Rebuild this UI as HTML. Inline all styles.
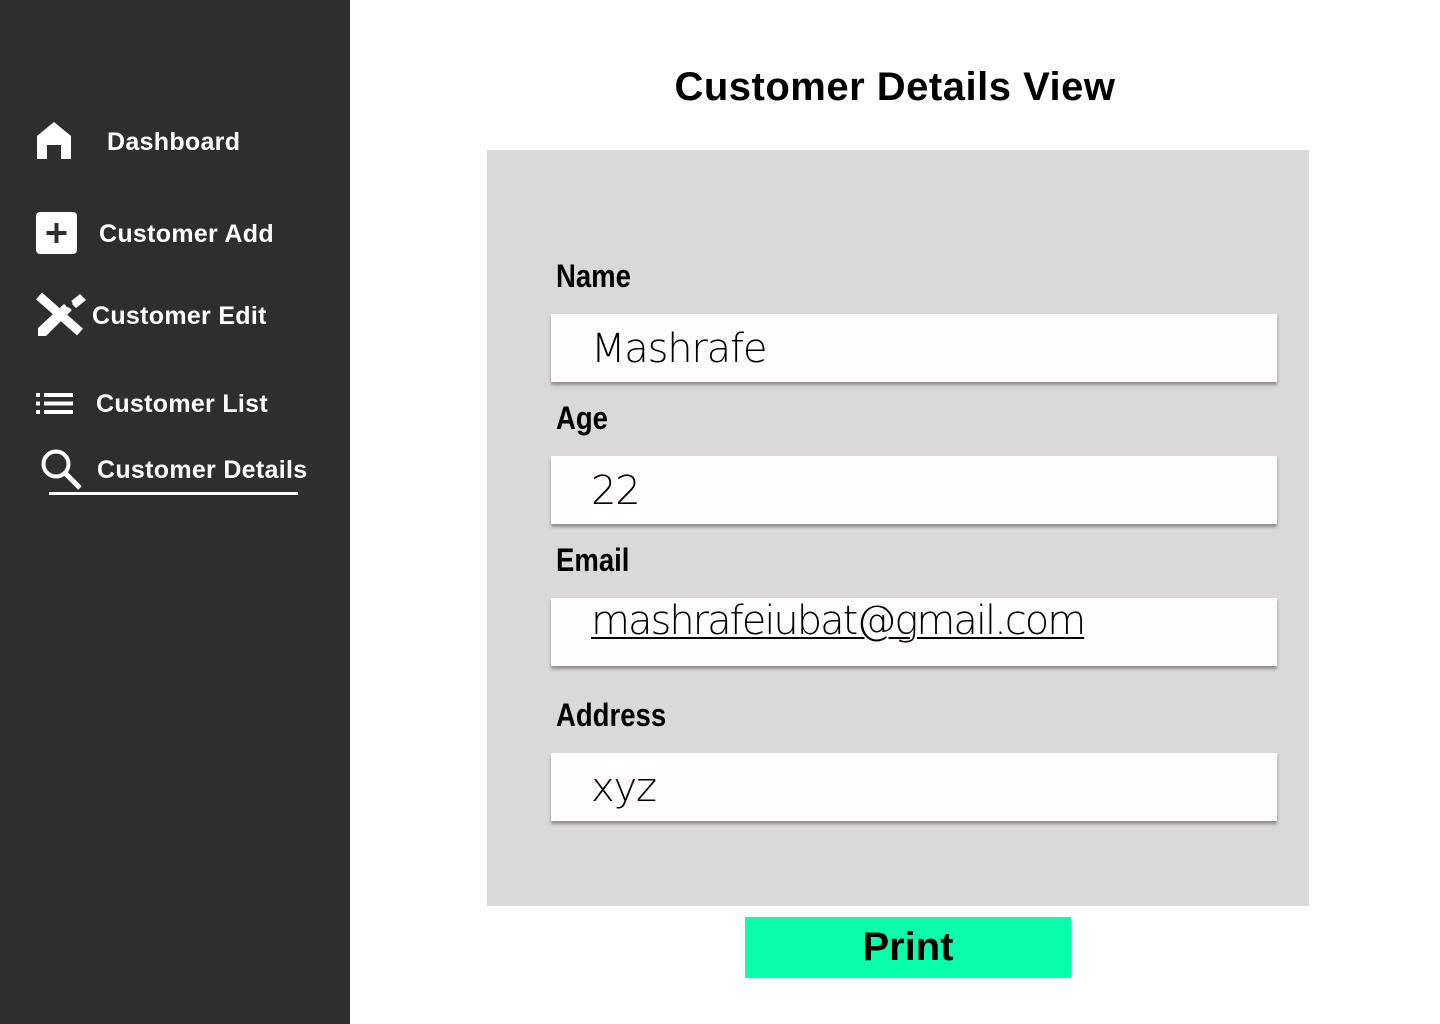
<!DOCTYPE html>
<html><head><meta charset="utf-8"><style>
body{margin:0;width:1440px;height:1024px;position:relative;background:#fff;font-family:"Liberation Sans",sans-serif;overflow:hidden}
.sb{position:absolute;left:0;top:0;width:350px;height:1024px;background:#2e2e2e}
.it{position:absolute;color:#fff;font-weight:bold;font-size:25px;line-height:30px;letter-spacing:0.3px}
.a{position:absolute}
h1{position:absolute;left:0;right:0;margin:0;top:64px;padding-left:350px;text-align:center;font-size:40px;line-height:46px;font-weight:bold;color:#000;letter-spacing:0.5px}
.panel{position:absolute;left:487px;top:150px;width:822px;height:756px;background:#d9d9d9}
.lb{position:absolute;left:556px;font-weight:bold;font-size:32px;line-height:36px;color:#000;transform:scaleX(0.86);transform-origin:0 0}
.bx{position:absolute;left:551px;width:726px;height:68px;background:#fffdfd;box-shadow:0 3px 3px rgba(0,0,0,.35)}
.bx span{position:absolute;left:40px;top:12px;font-size:40px;line-height:46px;color:#000;font-family:"DejaVu Sans","Liberation Sans",sans-serif;font-weight:200;letter-spacing:-1.2px}
.btn{position:absolute;left:745px;top:917px;width:326px;height:61px;background:#0affad;text-align:center;font-size:40px;line-height:61px;font-weight:bold}
</style></head><body>
<div class="sb">
<svg class="a" style="left:37px;top:122px" width="34" height="37" viewBox="0 0 34 37"><path d="M0 14 L17 0 L34 14 V37 H24 V23 H10 V37 H0Z" fill="#fff"/></svg>
<div class="it" style="left:107px;top:127px">Dashboard</div>
<svg class="a" style="left:36px;top:212px" width="41" height="42" viewBox="0 0 41 42"><rect width="41" height="42" rx="4" fill="#fff"/><path d="M20.5 11V31M10.5 21H30.5" stroke="#2e2e2e" stroke-width="4"/></svg>
<div class="it" style="left:99px;top:219px">Customer Add</div>
<svg class="a" style="left:36px;top:292px" width="50" height="46" viewBox="0 0 50 46"><path d="M3 4 L44 40" stroke="#fff" stroke-width="9"/><path d="M2 44 V36 L28 12 L36 18 L10 44Z" fill="#fff"/><path d="M34 10 L44 2 L50 8 L40 16Z" fill="#fff"/><path d="M30 14 L36 10" stroke="#2e2e2e" stroke-width="3"/></svg>
<div class="it" style="left:92px;top:301px">Customer Edit</div>
<svg class="a" style="left:36px;top:393px" width="37" height="21" viewBox="0 0 37 21"><g fill="#fff"><rect x="0" y="0" width="4" height="4"/><rect x="0" y="8.5" width="4" height="4"/><rect x="0" y="17" width="4" height="4"/><rect x="8" y="0" width="29" height="4"/><rect x="8" y="8.5" width="29" height="4"/><rect x="8" y="17" width="29" height="4"/></g></svg>
<div class="it" style="left:96px;top:389px">Customer List</div>
<svg class="a" style="left:41px;top:449px" width="42" height="42" viewBox="0 0 42 42"><circle cx="15" cy="15" r="12.5" fill="none" stroke="#fff" stroke-width="4"/><path d="M24 24 L39 39" stroke="#fff" stroke-width="5"/></svg>
<div class="it" style="left:97px;top:455px">Customer Details</div>
<div class="a" style="left:49px;top:492px;width:249px;height:3px;background:#fff"></div>
</div>
<h1>Customer Details View</h1>
<div class="panel"></div>
<div class="lb" style="top:258px">Name</div>
<div class="bx" style="top:314px"><span>Mashrafe</span></div>
<div class="lb" style="top:400px">Age</div>
<div class="bx" style="top:456px"><span>22</span></div>
<div class="lb" style="top:542px">Email</div>
<div class="bx" style="top:598px"><span style="top:0;letter-spacing:-2px;text-decoration:underline;text-decoration-thickness:2px;text-underline-offset:3px">mashrafeiubat@gmail.com</span></div>
<div class="lb" style="top:697px">Address</div>
<div class="bx" style="top:753px"><span>xyz</span></div>
<div class="btn">Print</div>
</body></html>
